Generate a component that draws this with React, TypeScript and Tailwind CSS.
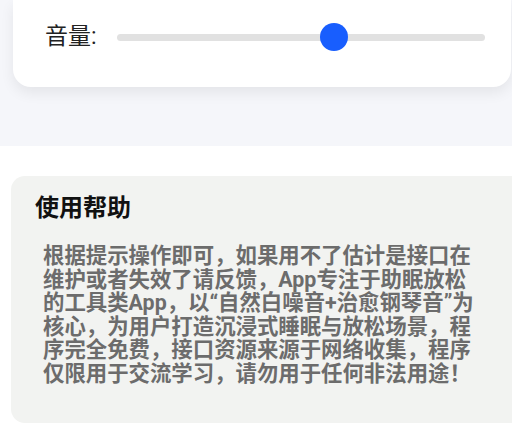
export default function App() {
  const font = { fontFamily: "Roboto, 'Noto Sans CJK SC', sans-serif" };
  const lines = [
    "根据提示操作即可，如果用不了估计是接口在",
    "维护或者失效了请反馈，App专注于助眠放松",
    "的工具类App，以“自然白噪音+治愈钢琴音”为",
    "核心，为用户打造沉浸式睡眠与放松场景，程",
    "序完全免费，接口资源来源于网络收集，程序",
    "仅限用于交流学习，请勿用于任何非法用途！",
  ];
  return (
    <div className="w-[512px] h-[425px] overflow-hidden bg-white" style={font}>
      <div className="h-[146px] bg-[#f5f6fa] pt-0">
        <div className="ml-[13px] mr-[1px] h-[87px] bg-white rounded-b-[18px] shadow-[0_6px_14px_rgba(0,0,0,0.07)] flex items-start pt-[23px] pl-[32px] pr-[26px]">
          <div className="flex items-center w-full h-[28px]">
            <span className="text-[23px] leading-[28px] text-[#222] font-normal whitespace-nowrap">音量:</span>
            <div className="ml-[20px] flex-1 h-[7px] rounded-full bg-[#e1e1e1] relative">
              <div className="absolute left-[203px] top-[-10.5px] w-[28px] h-[28px] rounded-full bg-[#185efe]" />
            </div>
          </div>
        </div>
      </div>
      <div className="h-[30px]" />
      <div className="ml-[11px] w-[520px] h-[247px] bg-[#f2f3f1] rounded-[14px] pt-[16px] pl-[24px]">
        <div className="text-[24px] leading-[32px] font-bold text-[#111]">使用帮助</div>
        <div className="mt-[20px] pl-[8px] text-[21.4px] leading-[23.5px] font-bold text-[#6c6c6c] whitespace-nowrap">
          {lines.map((l, i) => (
            <div key={i}>{l}</div>
          ))}
        </div>
      </div>
    </div>
  );
}
